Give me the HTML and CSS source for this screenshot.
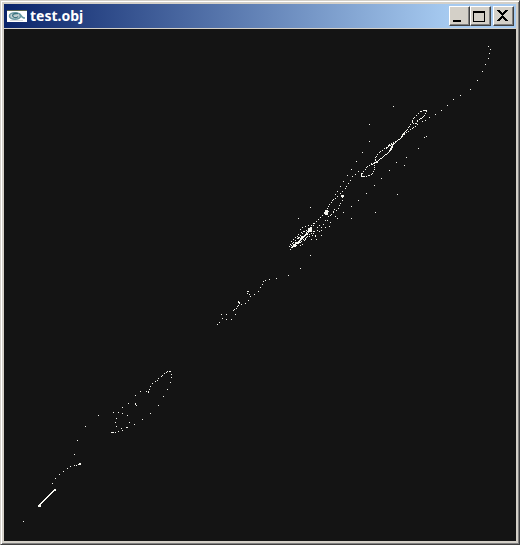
FILE: index.html
```
<!DOCTYPE html>
<html lang="en">
<head>
<meta charset="utf-8">
<title>test.obj</title>
<link rel="stylesheet" href="styles.css">
</head>
<body>
<main class="window">
  <header class="titlebar">
    <svg class="app-icon" viewBox="0 0 20 12" aria-hidden="true">
      <rect width="20" height="12" fill="#fff"/>
      <path d="M0 .5H20" stroke="#59654f"/>
      <ellipse cx="8" cy="6" rx="5.5" ry="3.2" fill="#c3d0d3" stroke="#6d9aa4" stroke-width="1.6"/>
      <path d="M11 3.6C6 3 5 5 6 6.5S10 8 11 6.5" fill="none" stroke="#3c7480" stroke-width="1.3"/>
      <path d="M12 4C15 4 13 8 18 8" fill="none" stroke="#689aa4" stroke-width="1.5"/>
      <path d="M3 10.5H16" stroke="#d4dadc"/>
    </svg>
    <h1 class="title">test.obj</h1>
    <div class="controls">
      <button class="control" type="button" aria-label="Minimize">
        <svg class="glyph" viewBox="0 0 17 16"><path d="M2 12h8v2H2z"/></svg>
      </button>
      <button class="control" type="button" aria-label="Maximize">
        <svg class="glyph" viewBox="0 0 17 16"><path fill-rule="evenodd" d="M1 3h12v11H1zM2 5v8h10V5z"/></svg>
      </button>
      <button class="control close" type="button" aria-label="Close">
        <svg class="glyph" viewBox="0 0 17 16"><path d="M2 2h3v1h1v1h1v1h1v-1h1v-1h1v-1h3v1h-1v1h-1v1h-1v1h-1v1h-1v1h1v1h1v1h1v1h1v1h1v1h-3v-1h-1v-1h-1v-1h-1v1h-1v1h-1v1h-3v-1h1v-1h1v-1h1v-1h1v-1h1v-1h-1v-1h-1v-1h-1v-1h-1v-1h-1z"/></svg>
      </button>
    </div>
  </header>
  <svg class="viewport" viewBox="4 29 512 512" role="img" aria-label="Point cloud"><path id="cloud"/></svg>
</main>
<script src="cloud.js"></script>
</body>
</html>
```
FILE: styles.css
```
* {
  box-sizing: border-box;
}

body {
  margin: 0;
  background: #d4d0c8;
  font-family: "Noto Sans", "Open Sans", sans-serif;
}

.window {
  display: flex;
  flex-direction: column;
  min-height: 100vh;
  padding: 3px;
  border: 1px solid;
  border-color: #d4d0c8 #404040 #404040 #d4d0c8;
  background: #d4d0c8;
  box-shadow: inset 1px 1px #fff, inset -1px -1px #808080;
}

.titlebar {
  display: flex;
  align-items: center;
  height: 24px;
  margin-bottom: 1px;
  padding: 0 2px 0 3px;
  background: linear-gradient(90deg, #0a246a, #a6caf0 calc(100% - 68px));
}

.app-icon {
  width: 20px;
  height: 12px;
}

.title {
  flex: 1;
  margin: 0 0 0 3px;
  color: #fff;
  font-size: 14px;
  line-height: 24px;
  font-weight: 700;
}

.controls {
  display: flex;
}

.control {
  width: 21px;
  height: 20px;
  padding: 0;
  border: 1px solid;
  border-color: #fff #404040 #404040 #fff;
  background: #d4d0c8;
  box-shadow: inset -1px -1px #808080;
}

.close {
  margin-left: 2px;
}

.glyph {
  display: block;
  width: 17px;
  height: 16px;
  margin: 1px;
  shape-rendering: crispEdges;
}

.viewport {
  display: block;
  width: 100%;
  flex: 1;
  background: #141414;
  fill: #f6f6f0;
  shape-rendering: crispEdges;
}
```
FILE: cloud.js
```
// Single vertices: x,y pairs.
const points = `
488,46 490,49 489,53 488,58 485,64 482,71 477,80 470,89 460,95 453,99 447,105 441,110 435,114 429,117 425,120 422,121
393,106 369,124 369,141 362,152 356,161 351,169 424,137 426,136 418,148 406,157 404,165 396,162 389,170 381,178 374,185
366,193 397,194 358,200 375,212 351,206 351,218 343,212 337,218 335,216 330,222 310,207 298,218 310,255 300,268
358,171 355,174 352,176 350,180 348,183 347,175 346,186 345,188 343,181 340,186 342,191 337,191 340,193 335,194 337,196
342,200 340,203 339,205 338,208 336,210 333,212 331,214 328,216 325,220 333,211 334,209
330,215 325,227 329,226 321,227 323,224 327,220 319,225 317,227 321,235 321,230 317,230 319,231 315,235 313,233 311,239
316,239 315,236 309,236 306,237 304,240 302,244 300,245 299,242 305,226 302,227 306,230 303,231 301,232 298,234 297,236
295,237 293,239 291,241 290,244 289,246 290,249 313,223 311,225 308,225 300,229 314,231 312,235 307,234 305,239
288,275 276,278 269,279 265,280 263,281 262,284 260,287 258,291 254,294 250,296 249,294 247,293 247,291 248,291 248,300
245,303 241,304 238,301 238,302 239,302 239,303 238,305 237,306 236,308 234,309 233,310 235,314 231,319 226,319 226,314
221,314 222,318 219,322 217,324
170,371 169,371 167,371 166,372 164,373 162,375 161,376 158,378 157,380 155,381 152,383 150,386 149,389 148,391 148,392
146,391 140,391 135,395 128,403 135,403 135,404 136,405 122,407 118,412 113,412 122,413 127,415 116,418 115,422 116,426
129,422 134,424 127,427 126,427 121,428 122,430 118,431 115,432 113,432 112,432 111,432 142,419 150,413 158,405 163,396
167,389 170,382 171,377 171,374
98,415 85,426 77,440 74,454 80,463 79,463 80,464 79,464 78,464 76,465 74,465 70,466 67,468 63,471 59,474 55,478 52,483
54,489 55,489 54,490 55,490 38,505 39,505 40,505 38,506 39,506 40,506 39,504 23,521`;

// Chains of vertices: spacing between vertices, then the corners of the chain.
const chains = [
  [2, '426,110 423,110 420,111 416,115 413,118 412,121 413,123 416,123 417,120 420,118 424,115 426,110'],
  [1, '426,110 423,110'],
  [1, '424,115 421,118'],
  [2, '412,122 408,127 405,131 401,136'],
  [1, '407,129 401,136'],
  [2, '417,124 412,128 406,132 401,137'],
  [1, '402,134 401,137 396,141 391,146'],
  [2, '395,141 388,145 384,148 379,152 375,157 375,160 374,163'],
  [1, '395,142 389,145 386,148'],
  [1, '392,146 390,150 387,153'],
  [1, '391,147 388,152 383,156 378,160 374,163 371,164'],
  [2, '371,163 366,167 363,171 361,174'],
  [1, '361,173 361,176 364,176'],
  [2, '364,176 369,175 372,173 374,169 374,164'],
  [2, '335,198 332,200 328,206 326,209'],
  [2, '324,213 318,219'],
  [2, '318,219 310,228'],
  [1, '310,227 305,234 299,240 292,247'],
  [1, '311,229 306,234 298,242 291,247'],
  [2, '308,228 302,233 297,238 292,243 290,246'],
  [2, '313,231 307,236 300,242 293,247'],
  [1, '297,238 299,237 300,239 298,241'],
  [1, '54,490 39,505'],
  [1, '53,490 39,504']
];

// Dense clusters: x, y, width, height.
const clusters = [
  [325, 210, 3, 5], [324, 212, 4, 2], [328, 211, 1, 1],
  [341, 195, 3, 2], [342, 197, 1, 1],
  [308, 229, 4, 3], [310, 227, 2, 2], [376, 161, 2, 2],
  [301, 236, 3, 2], [295, 242, 4, 2], [293, 244, 3, 3]
];

const cells = new Set(points.trim().split(/\s+/));

for (const [step, text] of chains) {
  const corners = text.split(' ').map(pair => pair.split(',').map(Number));
  for (let i = 1; i < corners.length; i++) {
    const [x0, y0] = corners[i - 1];
    const [x1, y1] = corners[i];
    const length = Math.max(Math.abs(x1 - x0), Math.abs(y1 - y0));
    for (let k = 0; k <= length; k += step) {
      cells.add(Math.round(x0 + (x1 - x0) * k / length) + ',' + Math.round(y0 + (y1 - y0) * k / length));
    }
  }
}

const dots = [...cells].map(cell => `M${cell}h1v1h-1z`);
const blocks = clusters.map(([x, y, w, h]) => `M${x},${y}h${w}v${h}h${-w}z`);
document.getElementById('cloud').setAttribute('d', dots.concat(blocks).join(''));
```
